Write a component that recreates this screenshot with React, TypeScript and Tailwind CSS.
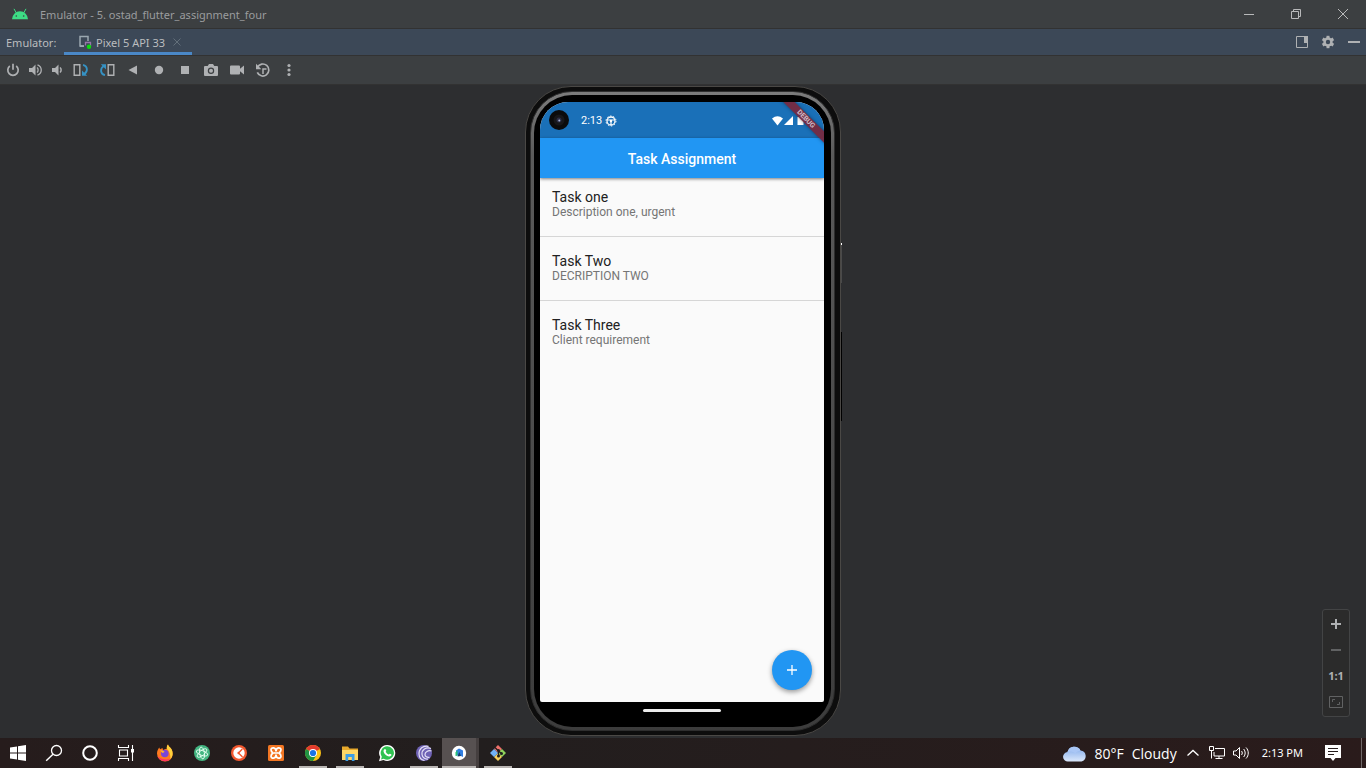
import type { ReactNode } from "react";

const GREY = "#afb1b3";
const BLUE = "#3592c4";

function Icon({ children, size = "size-4" }: { children: ReactNode; size?: string }) {
  return (
    <svg viewBox="0 0 16 16" className={`${size} shrink-0`} fill="none" aria-hidden="true">
      {children}
    </svg>
  );
}

function AndroidLogo() {
  return (
    <svg viewBox="0 0 18 12" className="h-3 w-[18px] shrink-0" aria-hidden="true">
      <path d="M1 11.3a8 8 0 0 1 16 0z" fill="#3ddc84" />
      <path d="M5.2 4.8 3.2 1.2M12.8 4.8l2-3.6" stroke="#3ddc84" strokeWidth="1" strokeLinecap="round" />
      <circle cx="5.3" cy="8" r=".8" fill="#3c3f41" />
      <circle cx="12.7" cy="8" r=".8" fill="#3c3f41" />
    </svg>
  );
}

function TitleBar() {
  return (
    <header className="flex h-7 shrink-0 items-center bg-[#3c3f41] pl-[11px]">
      <AndroidLogo />
      <h1 className="ml-[11px] flex-1 whitespace-nowrap pt-0.5 text-[11px] leading-4 text-[#9a9c9e]">
        Emulator - 5. ostad_flutter_assignment_four
      </h1>
      <button type="button" aria-label="Minimize" className="flex h-full w-[47px] items-center justify-center">
        <Icon>
          <path d="M3 8.5h10" stroke="#b8b9ba" />
        </Icon>
      </button>
      <button type="button" aria-label="Restore" className="flex h-full w-[47px] items-center justify-center">
        <Icon>
          <path d="M3.5 5.5h7v7h-7zM5.5 5V3.5h7v7H11" stroke="#b8b9ba" />
        </Icon>
      </button>
      <button type="button" aria-label="Close" className="flex h-full w-[47px] items-center justify-center">
        <Icon>
          <path d="m3 3 10 10M13 3 3 13" stroke="#b8b9ba" />
        </Icon>
      </button>
    </header>
  );
}

function TabBar() {
  return (
    <div className="flex h-7 shrink-0 items-center border-y border-[#323232] bg-[#3c4857] pl-1.5">
      <span className="w-[58px] pt-0.5 text-[11px] leading-4 text-[#bbbdbf]">Emulator:</span>
      <div className="flex h-full items-center border-b-[3px] border-[#4a88c7] pl-[13px] pr-2 pt-[3px]">
        <Icon>
          <path d="M7 12H3V2.500h8V7" stroke="#9aa7b0" strokeWidth="1.500" />
          <path d="M3 11.300h4V13H3z" fill="#9aa7b0" />
          <path d="M8.500 11.500v-3h5v3.500" stroke="#9876aa" strokeWidth="1.300" />
          <circle cx="12" cy="12.800" r="2.200" fill="#0bdc0b" />
        </Icon>
        <span className="ml-[3px] whitespace-nowrap pt-px text-[11px] leading-4 text-[#bbbdbf]">Pixel 5 API 33</span>
        <button type="button" aria-label="Close tab" className="ml-[5px] flex">
          <Icon size="size-3.5">
            <path d="m4 4 8 8M12 4l-8 8" stroke="#64707c" strokeWidth="1.100" />
          </Icon>
        </button>
      </div>
      <div className="ml-auto flex items-center gap-2.5 pr-1">
        <button type="button" aria-label="Window mode" className="flex">
          <Icon>
            <path d="M2.500 2.500h11v11h-11z" stroke={GREY} />
            <path d="M10 2h4v7h-4z" fill={GREY} />
          </Icon>
        </button>
        <button type="button" aria-label="Settings" className="flex">
          <Icon>
            <g fill={GREY}>
              <circle cx="8" cy="8" r="4.700" />
              <path d="M6.500 1.800h3v12.400h-3z" />
              <path d="M6.500 1.800h3v12.400h-3z" transform="rotate(60 8 8)" />
              <path d="M6.500 1.800h3v12.400h-3z" transform="rotate(120 8 8)" />
            </g>
            <circle cx="8" cy="8" r="2.200" fill="#3c4857" />
          </Icon>
        </button>
        <button type="button" aria-label="Hide" className="flex">
          <Icon>
            <path d="M2 8h12" stroke={GREY} strokeWidth="2" />
          </Icon>
        </button>
      </div>
    </div>
  );
}

const tools: { label: string; width: string; icon: ReactNode }[] = [
  {
    label: "Power",
    width: "w-[26px]",
    icon: <path d="M4.800 4A5.200 5.200 0 1 0 11.200 4M8 1.800v6" stroke={GREY} strokeWidth="1.700" />,
  },
  {
    label: "Volume up",
    width: "w-5",
    icon: (
      <>
        <path d="M1 6h3l3.500-3.500v11L4 10H1z" fill={GREY} />
        <path d="M9 5.500c1.500 1.200 1.500 3.800 0 5M9.500 2.800c5 2 5 8.400 0 10.400" stroke={GREY} strokeWidth="1.300" />
      </>
    ),
  },
  {
    label: "Volume down",
    width: "w-[22px]",
    icon: (
      <>
        <path d="M3 6h3l3.500-3.500v11L6 10H3z" fill={GREY} />
        <path d="M11 5.500c1.500 1.200 1.500 3.800 0 5" stroke={GREY} strokeWidth="1.500" />
      </>
    ),
  },
  {
    label: "Rotate left",
    width: "w-[26px]",
    icon: (
      <>
        <path d="M1.200 2.700h5.600v10.600H1.200z" stroke={GREY} strokeWidth="1.400" />
        <path d="M10 2.800c5 1.200 5 6.800 1.200 9.200" stroke={BLUE} strokeWidth="1.800" />
        <path d="M9 8.500v5.300h5.200z" fill={BLUE} />
      </>
    ),
  },
  {
    label: "Rotate right",
    width: "w-[26px]",
    icon: (
      <>
        <path d="M9.200 2.700h5.600v10.600H9.200z" stroke={GREY} strokeWidth="1.400" />
        <path d="M6 13.200C1.200 12 .8 6.400 4.800 4" stroke={BLUE} strokeWidth="1.800" />
        <path d="M7 7.500V2.200H1.800z" fill={BLUE} />
      </>
    ),
  },
  { label: "Back", width: "w-[26px]", icon: <path d="M3.500 8 12 3.500v9z" fill={GREY} /> },
  { label: "Home", width: "w-[26px]", icon: <circle cx="8" cy="8" r="4.200" fill={GREY} /> },
  { label: "Overview", width: "w-[26px]", icon: <path d="M4 4h8v8H4z" fill={GREY} /> },
  {
    label: "Take screenshot",
    width: "w-[26px]",
    icon: (
      <>
        <path d="M2 4h2.700L6 2h4l1.300 2H14q1 0 1 1v8q0 1-1 1H2q-1 0-1-1V5q0-1 1-1z" fill={GREY} />
        <circle cx="8" cy="8.700" r="3.200" fill="#3c3f41" />
        <circle cx="8" cy="8.700" r="2" fill={GREY} />
      </>
    ),
  },
  {
    label: "Record screen",
    width: "w-[26px]",
    icon: <path d="M2 3.500h8q1 0 1 1v2.200l4-3.200v9l-4-3.200v2.200q0 1-1 1H2q-1 0-1-1v-7q0-1 1-1z" fill={GREY} />,
  },
  {
    label: "Snapshots",
    width: "w-[26px]",
    icon: (
      <>
        <path d="M2.500 5.200a6 6 0 1 1-.2 5.200" stroke={GREY} strokeWidth="1.700" />
        <path d="M1 1.800v5.400h5.400z" fill={GREY} />
        <path d="M8 12V7h3.500" stroke={GREY} strokeWidth="1.500" />
      </>
    ),
  },
  {
    label: "More",
    width: "w-[26px]",
    icon: (
      <g fill={GREY}>
        <circle cx="8" cy="3.500" r="1.600" />
        <circle cx="8" cy="8" r="1.600" />
        <circle cx="8" cy="12.500" r="1.600" />
      </g>
    ),
  },
];

function Toolbar() {
  return (
    <div className="flex h-[29px] shrink-0 items-center border-b border-[#323232] bg-[#3c3f41]">
      {tools.map((t) => (
        <button key={t.label} type="button" aria-label={t.label} className={`${t.width} flex shrink-0 justify-center`}>
          <Icon>{t.icon}</Icon>
        </button>
      ))}
    </div>
  );
}

const tasks = [
  { title: "Task one", description: "Description one, urgent" },
  { title: "Task Two", description: "DECRIPTION TWO" },
  { title: "Task Three", description: "Client requirement" },
];

function StatusBar() {
  return (
    <div className="flex h-9 shrink-0 items-center bg-[#1a70b8] pl-[9px] pr-[18px] text-white">
      <svg viewBox="0 0 20 20" className="size-5" aria-hidden="true">
        <circle cx="10" cy="10" r="10" fill="#0b0b0c" />
        <circle cx="10" cy="10" r="5.500" fill="#17171a" />
        <circle cx="10" cy="10" r="2.500" fill="#2b2d45" />
        <circle cx="10.300" cy="10.500" r="1" fill="#a9b4d8" />
      </svg>
      <span className="ml-3 pt-0.5 text-[11px] leading-4">2:13</span>
      <svg viewBox="0 0 12 12" className="ml-[3px] mt-0.5 size-3" fill="none" stroke="#fff" aria-hidden="true">
        <circle cx="6" cy="6" r="4" strokeWidth="1.300" />
        <circle cx="6" cy="6" r="5" strokeWidth="1" strokeDasharray="1.500 1.640" />
        <path d="M2.500 5h7M6 6v4" strokeWidth="1.200" />
        <circle cx="6" cy="6" r="1.200" fill="#fff" stroke="none" />
      </svg>
      <svg viewBox="0 0 34 12" className="ml-auto mt-0.5 h-3 w-[34px]" fill="#fff" aria-hidden="true">
        <path d="M0 3.500q5.500-4.500 11 0L5.500 10.500z" />
        <path d="M21 1v9h-9z" />
        <path d="M25.500 2H27V1h3v1h1.500v8h-6z" />
      </svg>
    </div>
  );
}

function PhoneScreen() {
  return (
    <main className="relative flex flex-1 flex-col overflow-hidden rounded-b-[2px] rounded-t-[28px] bg-[#fafafa] font-[Roboto,sans-serif]">
      <StatusBar />
      <div className="z-10 flex h-10 shrink-0 items-center justify-center bg-[#2196f3] pt-0.5 shadow-[0_1px_3px_rgba(0,0,0,0.5)]">
        <h2 className="text-[14px] font-medium leading-5 text-white">Task Assignment</h2>
      </div>
      <ul className="flex flex-col">
        {tasks.map((t, i) => (
          <li
            key={t.title}
            className={`flex h-16 flex-col px-3 ${i === 0 ? "-mt-[5px]" : ""} ${
              i < tasks.length - 1 ? "border-b border-[#d6d6d6]" : ""
            } pt-[15px]`}
          >
            <h3 className="text-[14px] leading-[18px] text-[#212121]">{t.title}</h3>
            <p className="text-[12px] leading-3 text-[#757575]">{t.description}</p>
          </li>
        ))}
      </ul>
      <button
        type="button"
        aria-label="Add task"
        className="absolute bottom-3 right-3 flex size-10 items-center justify-center rounded-full bg-[#2196f3] shadow-[0_2px_5px_rgba(0,0,0,0.4)]"
      >
        <Icon>
          <path d="M8 3v10M3 8h10" stroke="#fff" strokeWidth="1.300" />
        </Icon>
      </button>
      <div className="absolute right-[-22px] top-[13px] z-20 h-2 w-20 rotate-45 bg-[#76293f]/95 text-center text-[7px] font-bold leading-2 text-[#d0bcc6] shadow-[0_0_4px_rgba(0,0,0,0.4)]">
        DEBUG
      </div>
    </main>
  );
}

function Phone() {
  return (
    <div className="relative flex w-[316px] rounded-[46px] border border-[#4a4845] bg-[#0d0d0d] py-1 pl-1 pr-[5px]">
      <div className="absolute -right-0.5 top-[156px] h-10 w-px bg-[#4a4a4a]" />
      <div className="absolute -right-0.5 top-[156px] h-0.5 w-px bg-white" />
      <div className="absolute -right-0.5 top-[245px] h-[89px] w-px bg-black" />
      <div className="flex flex-1 rounded-[42px] border border-[#2e2e2e] bg-linear-to-b from-[#7c7c7c] via-[#5a5a5a] via-10% to-[#3c3c3c] p-[3px]">
        <div className="flex flex-1 flex-col rounded-[38px] bg-black pl-1.5 pr-[7px] pt-[7px]">
          <PhoneScreen />
          <div className="flex h-[25px] shrink-0 justify-center pt-[7px]">
            <div className="h-[3px] w-[78px] rounded-full bg-[#ececec]" />
          </div>
        </div>
      </div>
    </div>
  );
}

function ZoomControls() {
  return (
    <div className="absolute bottom-[21px] right-4 flex h-[108px] w-7 flex-col items-center justify-between rounded-[3px] border border-[#434445] bg-[#2b2b2b] py-1.5">
      <button type="button" aria-label="Zoom in" className="flex">
        <Icon>
          <path d="M8 3v10M3 8h10" stroke={GREY} strokeWidth="2" />
        </Icon>
      </button>
      <button type="button" aria-label="Zoom out" className="flex">
        <Icon>
          <path d="M3 8h10" stroke="#616263" strokeWidth="2" />
        </Icon>
      </button>
      <button type="button" className="text-[11px] font-bold leading-4 text-[#afb1b3]">
        1:1
      </button>
      <button type="button" aria-label="Fit to window" className="flex">
        <Icon>
          <path d="M1.500 2.500h13v11h-13z" stroke="#616263" />
          <path d="M4.500 8V5.500H7M9 10.500h2.500V8" stroke="#616263" />
        </Icon>
      </button>
    </div>
  );
}

function TaskbarIcon({ children }: { children: ReactNode }) {
  return (
    <svg viewBox="0 0 18 18" className="size-[18px]" fill="none" aria-hidden="true">
      {children}
    </svg>
  );
}

const systemButtons: { label: string; icon: ReactNode }[] = [
  {
    label: "Start",
    icon: <path d="M1 3.500 8 2.500v6H1zM9 2.300l8-1.300v7.500H9zM1 9.500h7v6l-7-1zM9 9.500h8V17l-8-1.300z" fill="#fff" />,
  },
  {
    label: "Search",
    icon: (
      <>
        <circle cx="11.500" cy="6.500" r="5" stroke="#fff" strokeWidth="1.300" />
        <path d="m8 10.200-6.800 6.600" stroke="#fff" strokeWidth="1.400" />
      </>
    ),
  },
  { label: "Cortana", icon: <circle cx="9" cy="9" r="6.800" stroke="#fff" strokeWidth="2" /> },
  {
    label: "Task view",
    icon: (
      <>
        <path
          d="M1.500 1v2.500h10V1M1.500 17v-2.500h10V17M2.500 6h8v6h-8zM15.500 1v16"
          stroke="#fff"
          strokeWidth="1.100"
        />
        <path d="M14 5h3v3.500h-3z" fill="#fff" />
      </>
    ),
  },
];

const apps: { label: string; state?: "open" | "active"; icon: ReactNode }[] = [
  {
    label: "Firefox",
    icon: (
      <>
        <path
          d="M9 17.500A8 8 0 0 1 1 9.500C1 7 2 5 3.300 3.500l.7 1.700L6.500 4l.5 2 4-1.500C10.500 3 11 1.500 12 .5c.5 2 2 2.500 3 4 3.800 5.500.8 13-6 13z"
          fill="#ff7a1f"
        />
        <path d="M12 .5c.5 2 2 2.500 3 4 2.500 3.500 2 8-.5 10.500 0-4-1-8-3.500-10C10.500 3 11 1.500 12 .5z" fill="#ffd23c" />
        <path d="M1.500 12c1.500 4.500 8 7.500 13 3-4 1-10 .5-13-3z" fill="#ff3265" />
        <circle cx="8.800" cy="9.500" r="3.800" fill="#7a46d8" />
        <path d="M4 6.500c2-.8 4 0 4.500 1.500L6.500 9z" fill="#ffb02e" />
      </>
    ),
  },
  {
    label: "Atom",
    icon: (
      <>
        <circle cx="9" cy="9" r="8" fill="#43b581" />
        <g stroke="#e6fff2" strokeWidth=".9">
          <ellipse cx="9" cy="9" rx="6" ry="2.400" transform="rotate(20 9 9)" />
          <ellipse cx="9" cy="9" rx="6" ry="2.400" transform="rotate(80 9 9)" />
          <ellipse cx="9" cy="9" rx="6" ry="2.400" transform="rotate(140 9 9)" />
        </g>
      </>
    ),
  },
  {
    label: "Time tracker",
    icon: (
      <>
        <circle cx="9" cy="9" r="8" fill="#f2582f" />
        <circle cx="9" cy="9" r="5.700" fill="#fff" />
        <path d="M9 8.500 12.300 5M9 9.500l3.500 3.500" stroke="#f2582f" strokeWidth="1.400" />
        <circle cx="8.600" cy="9" r="1.200" fill="#f2582f" />
      </>
    ),
  },
  {
    label: "XAMPP",
    icon: (
      <>
        <rect x="1" y="1" width="16" height="16" rx="1.500" fill="#f37623" />
        <path
          d="M9 7.500V7c0-4-5-4-5-1.200C4 7.500 5 8.300 6 9c-1 .7-2 1.500-2 3.200C4 15 9 15 9 11v-.5M9 7.500V7c0-4 5-4 5-1.200 0 1.700-1 2.500-2 3.200 1 .7 2 1.500 2 3.200C14 15 9 15 9 11v-.5M7 9h4"
          stroke="#fff"
          strokeWidth="1.700"
        />
      </>
    ),
  },
  {
    label: "Chrome",
    state: "open",
    icon: (
      <>
        <circle cx="9" cy="9" r="8" fill="#fbc116" />
        <path d="M9 9 2.070 5A8 8 0 0 1 15.930 5z" fill="#e33b2e" />
        <path d="M2.070 5A8 8 0 0 0 9 17l3.460-6L9 9z" fill="#229342" />
        <path d="M2.070 5h13.860L9 5.500z" fill="#e33b2e" />
        <circle cx="9" cy="9" r="4" fill="#fff" />
        <circle cx="9" cy="9" r="3.100" fill="#1a73e8" />
      </>
    ),
  },
  {
    label: "File Explorer",
    state: "open",
    icon: (
      <>
        <path d="M1 2.500h6l1.500 2H17V16H1z" fill="#e8a92c" />
        <path d="M1 6h16v10H1z" fill="#ffd866" />
        <path d="M4.500 10h9v7h-2.700v-4H7.200v4H4.500z" fill="#3d9ee5" />
      </>
    ),
  },
  {
    label: "WhatsApp",
    icon: (
      <>
        <path d="M9.200 1a8 8 0 1 1-3.800 15L1 17.200 2.200 13A8 8 0 0 1 9.200 1z" fill="#fff" />
        <path d="M9.200 2.300a6.700 6.700 0 1 1-3.500 12.400L3 15.400l.8-2.700A6.700 6.700 0 0 1 9.200 2.300z" fill="#2fc351" />
        <path
          d="M6.500 5.200c.9-.7 1.300.2 1.700 1.400.2.600-.7 1-.4 1.500.6 1.100 1.500 1.900 2.700 2.400.5.200.9-1 1.400-.8 2 .9 1.900 1 1.100 2.100-1.500 1.800-4.600.2-6-1.500-1.500-1.700-2.200-4-.5-5.100z"
          fill="#fff"
        />
      </>
    ),
  },
  {
    label: "BitTorrent",
    state: "open",
    icon: (
      <>
        <circle cx="9" cy="9" r="8" fill="#6f62b5" />
        <path
          d="M16 4.500C11 2.500 6.500 6 7 10.500c.4 3 3 5 6 4.500M16.500 7c-3.500-1-6.500 1-6.500 3.500 0 2 2 3.300 4.500 2.800M13.500 2.300C8 1 3.800 5 4 10c.2 3.500 2.500 6 5.500 6.500"
          stroke="#e4e0f7"
          strokeWidth="1.200"
        />
      </>
    ),
  },
  {
    label: "Android Studio",
    state: "active",
    icon: (
      <>
        <circle cx="9" cy="9" r="7.200" fill="#fff" />
        <path d="M6 6.500 9 4.500l4 2V13l-3-1.500H6z" fill="#2f7de1" />
        <path d="M5.500 8.500 7.500 6v5.500l-2 .5z" fill="#2bc275" />
        <path d="m7.500 12.500 1.800-4.500 1.700 4z" fill="#163d66" />
      </>
    ),
  },
  {
    label: "Git",
    state: "open",
    icon: (
      <>
        <path d="M9 1 13 5 9 9 5 5z" fill="#f0706a" />
        <path d="m13 5 4 4-4 4-4-4z" fill="#90d45c" />
        <path d="m9 9 4 4-4 4-4-4z" fill="#f7cf5a" />
        <path d="m5 5 4 4-4 4-4-4z" fill="#72b2f5" />
        <path d="M6 3.500 9.500 7v5.500M9.500 7l3 2.500" stroke="#1f1f1f" strokeWidth="1.300" />
        <circle cx="9.500" cy="6.500" r="1.500" fill="#1f1f1f" />
        <circle cx="9.500" cy="12" r="1.500" fill="#1f1f1f" />
        <circle cx="12.500" cy="9.500" r="1.500" fill="#1f1f1f" />
      </>
    ),
  },
];

function Taskbar() {
  return (
    <footer className="flex h-[30px] shrink-0 items-stretch bg-linear-to-r from-[#261c1c] via-[#221e1e] via-35% to-[#2a1b1b] text-white">
      {systemButtons.map((b) => (
        <button key={b.label} type="button" aria-label={b.label} className="flex w-9 items-center justify-center">
          <TaskbarIcon>{b.icon}</TaskbarIcon>
        </button>
      ))}
      <div className="ml-0.5 flex">
        {apps.map((a) => (
          <button
            key={a.label}
            type="button"
            aria-label={a.label}
            className={`flex w-[37px] flex-col items-center justify-between ${
              a.state === "active" ? "border-r-[3px] border-[#453f3f] bg-[#575151]" : ""
            }`}
          >
            <span className="flex flex-1 items-center pt-0.5">
              <TaskbarIcon>{a.icon}</TaskbarIcon>
            </span>
            <span
              className={`h-0.5 ${a.state === "active" ? "w-full bg-[#b9b5b3]" : a.state ? "w-7 bg-[#b9b5b3]" : "w-7"}`}
            />
          </button>
        ))}
      </div>
      <div className="ml-auto flex items-center">
        <svg viewBox="0 0 24 17" className="h-[17px] w-6" aria-hidden="true">
          <defs>
            <linearGradient id="cloud" x1="0" y1="0" x2="0" y2="1">
              <stop offset="0" stopColor="#7fa9ea" />
              <stop offset="1" stopColor="#dbe8fb" />
            </linearGradient>
          </defs>
          <path d="M5 16.500a4.700 4.700 0 0 1-.5-9.400A7 7 0 0 1 17.500 5.500 5.600 5.600 0 0 1 18.500 16.500z" fill="url(#cloud)" />
          <path d="M4.500 7.100A7 7 0 0 1 17.500 5.500c-3 .2-4.500 2-5 3.500-2-2.500-5-3-8-1.900z" fill="#a9c6f5" />
        </svg>
        <span className="ml-[7px] flex gap-2 pt-0.5 font-['Open_Sans','Noto_Sans',sans-serif] text-[14px] leading-5">
          <span>80°F</span>
          <span>Cloudy</span>
        </span>
        <button type="button" aria-label="Show hidden icons" className="ml-2 flex">
          <Icon>
            <path d="m2.500 10.500 5.500-5 5.500 5" stroke="#fff" strokeWidth="1.300" />
          </Icon>
        </button>
        <button type="button" aria-label="Network" className="ml-2 flex">
          <Icon>
            <path d="M6 3.500h9.500v7.500H5V7M10 11v2.500M6.500 13.500h7M.5 1.500h4v4h-4zM2.500 5.500v8" stroke="#fff" />
          </Icon>
        </button>
        <button type="button" aria-label="Volume" className="ml-2 flex">
          <Icon>
            <path
              d="M.5 6h2.500l3.500-3.500v11L3 10H.5zM8.500 6c1 1.200 1 2.800 0 4M10.700 4c2 2.400 2 5.600 0 8M13 2.500c3 3 3 8 0 11"
              stroke="#fff"
            />
          </Icon>
        </button>
        <time className="ml-[13px] text-[11px] leading-4">2:13 PM</time>
        <button type="button" aria-label="Notifications" className="ml-[21px] mr-[19px] flex">
          <TaskbarIcon>
            <path d="M1 1h16v13h-5.500L9 17l-2.500-3H1z" fill="#fff" />
            <path d="M4 4.500h10M4 7.500h10M4 10.500h6" stroke="#261c1c" />
          </TaskbarIcon>
        </button>
        <div className="mr-1 h-full w-px bg-[#6f6767]" />
      </div>
    </footer>
  );
}

export default function App() {
  return (
    <div className="flex h-screen flex-col overflow-hidden bg-[#2d2e30] font-['Noto_Sans',sans-serif]">
      <TitleBar />
      <TabBar />
      <Toolbar />
      <section aria-label="Device" className="relative flex min-h-0 flex-1 justify-center pb-0.5 pt-px">
        <Phone />
        <ZoomControls />
      </section>
      <Taskbar />
    </div>
  );
}
